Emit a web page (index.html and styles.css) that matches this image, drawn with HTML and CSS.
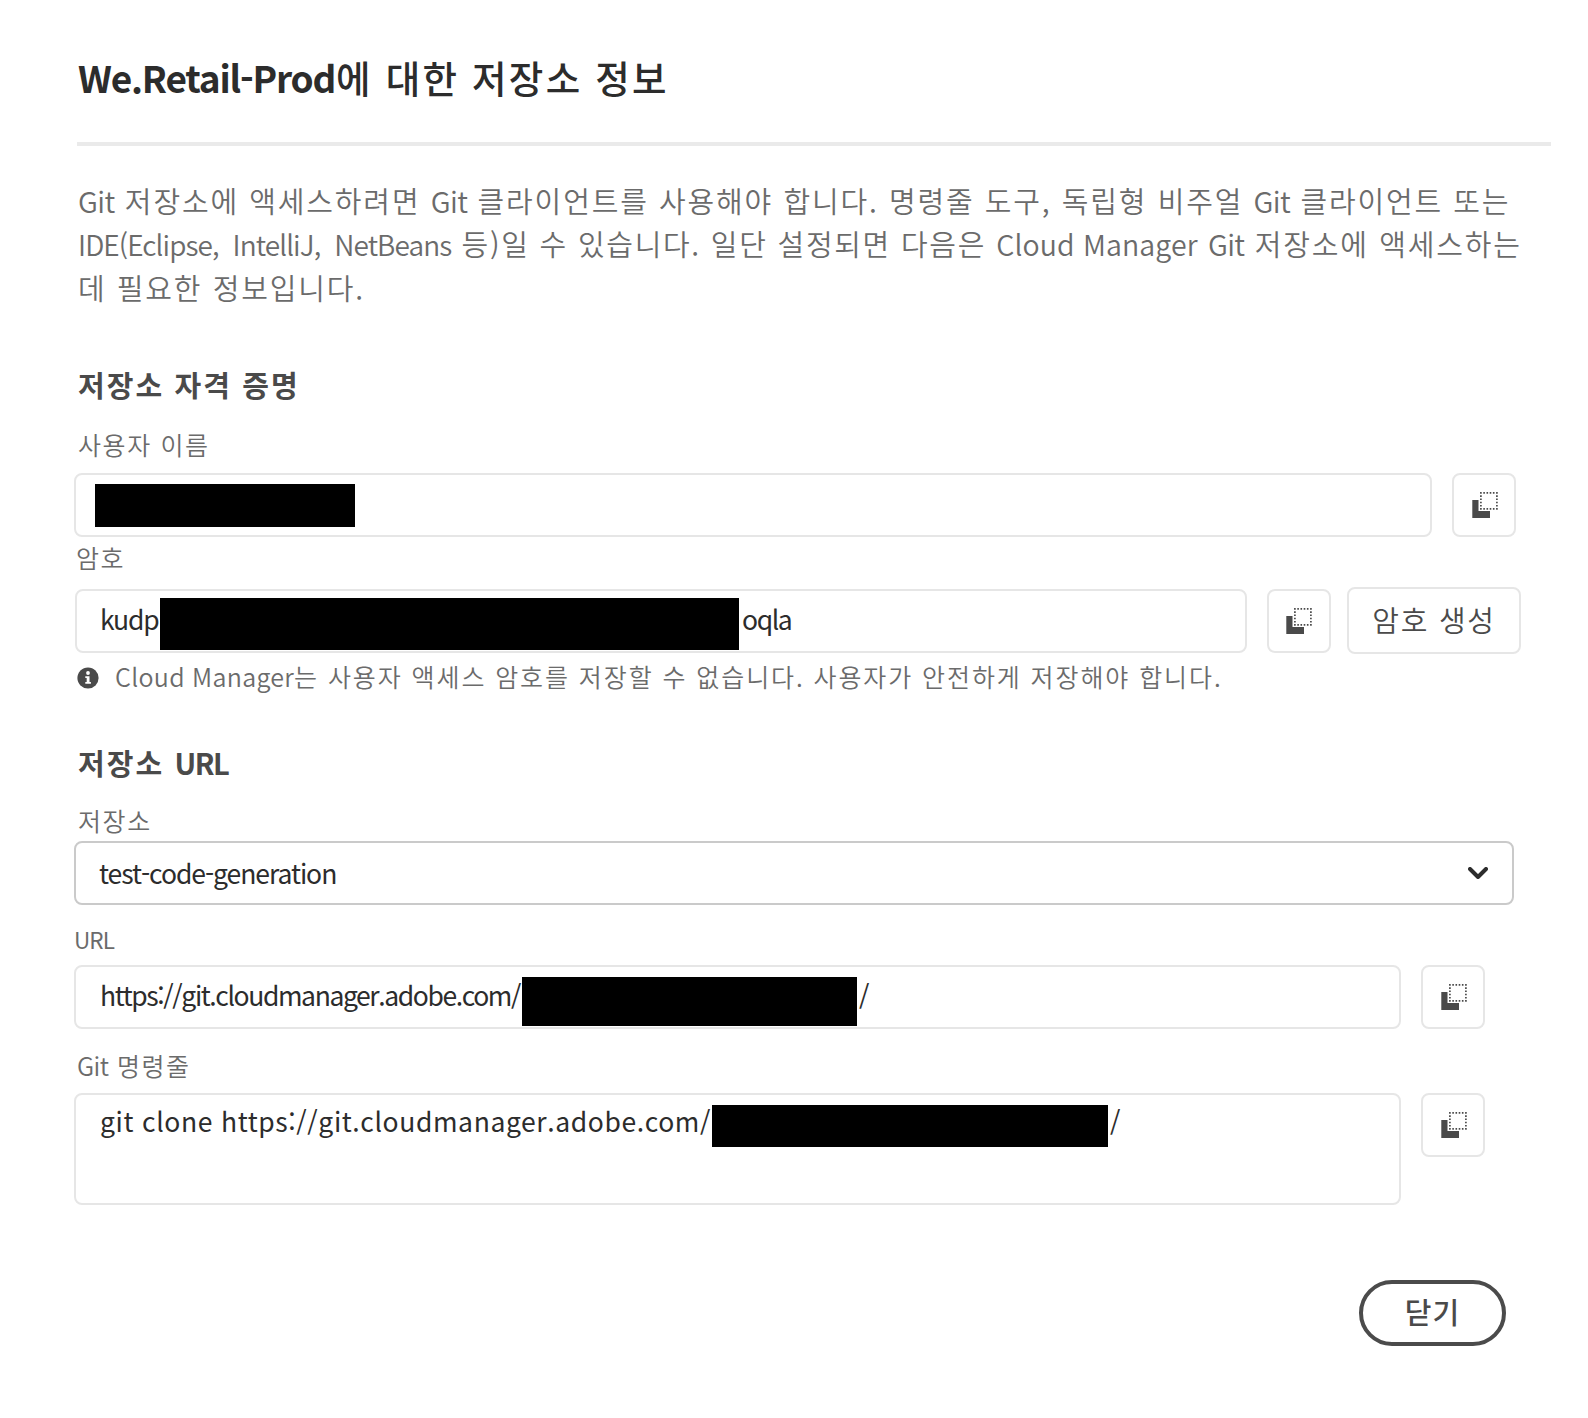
FILE: index.html
```html
<!DOCTYPE html>
<html lang="ko">
<head>
<meta charset="utf-8">
<title>저장소 정보</title>
<link rel="stylesheet" href="styles.css">
</head>
<body>
<svg class="defs" aria-hidden="true">
  <symbol id="copy" viewBox="0 0 26 26">
    <path d="M0.3 8H6.5V19H18V26H0.3Z" fill="#4a4a4a"/>
    <rect x="8.9" y="0.9" width="16" height="16" fill="none" stroke="#4a4a4a" stroke-width="1.7" stroke-dasharray="1.6 1.6" stroke-dashoffset="0.8"/>
  </symbol>
</svg>
<main class="dialog">
  <h1 class="title"><span class="title-latin">We.Retail-Prod</span>에 대한 저장소 정보</h1>
  <p class="intro"><span class="tight">Git</span> 저장소에 액세스하려면 <span class="tight">Git</span> 클라이언트를 사용해야 합니다. 명령줄 도구, 독립형 비주얼 <span class="tight">Git</span> 클라이언트 또는<br><span class="products">IDE(Eclipse, IntelliJ, NetBeans</span> <span class="condensed">등)일 수 있습니다. 일단 설정되면 다음은</span> <span class="brand">Cloud Manager</span> <span class="tight">Git</span> 저장소에 액세스하는<br>데 필요한 정보입니다.</p>

  <section class="credentials">
    <h2 class="heading">저장소 자격 증명</h2>
    <label class="label">사용자 이름</label>
    <div class="row">
      <div class="field field-user"><span class="redact redact-user"></span></div>
      <button class="copy"><svg><use href="#copy"/></svg></button>
    </div>
    <label class="label label-password">암호</label>
    <div class="row row-password">
      <div class="field field-password"><span class="value value-password">kudp</span><span class="redact redact-password"></span><span class="value value-tail">oqla</span></div>
      <button class="copy"><svg><use href="#copy"/></svg></button>
      <button class="generate">암호 생성</button>
    </div>
    <p class="hint">
      <svg class="info" viewBox="0 0 22 22"><circle cx="11" cy="11" r="10.6" fill="#4a4a4a"/><circle cx="11" cy="6" r="1.9" fill="#fff"/><path d="M8.3 9.2h4.2v5.8h1.4v1.8H8.3V15h1.4v-4H8.3Z" fill="#fff"/></svg>
      <span class="hint-text"><span class="latin">Cloud Manager</span>는 사용자 액세스 암호를 저장할 수 없습니다. 사용자가 안전하게 저장해야 합니다.</span>
    </p>
  </section>

  <section class="urls">
    <h2 class="heading">저장소 <span class="heading-latin">URL</span></h2>
    <label class="label">저장소</label>
    <div class="select"><span class="value value-select">test-code-generation</span><svg class="chevron" viewBox="0 0 20 12"><path d="M2 2L10 10L18 2" fill="none" stroke="#2c2c2c" stroke-width="4" stroke-linecap="round" stroke-linejoin="round"/></svg></div>
    <label class="label label-url">URL</label>
    <div class="row">
      <div class="field field-url"><span class="value value-url">https://git.cloudmanager.adobe.com/</span><span class="redact redact-url"></span><span class="value value-slash">/</span></div>
      <button class="copy"><svg><use href="#copy"/></svg></button>
    </div>
    <label class="label label-git"><span class="tight">Git</span> 명령줄</label>
    <div class="row">
      <div class="field field-git"><span class="value value-git">git clone https://git.cloudmanager.adobe.com/</span><span class="redact redact-git"></span><span class="value value-slash-git">/</span></div>
      <button class="copy"><svg><use href="#copy"/></svg></button>
    </div>
  </section>
  <footer class="footer"><button class="close">닫기</button></footer>
</main>
</body>
</html>
```
FILE: styles.css
```css
* { box-sizing: border-box; margin: 0; padding: 0; }
body { background: #fff; color: #6b6b6b; font-family: "Noto Sans CJK KR", "Open Sans", sans-serif; width: 1588px; height: 1418px; overflow: hidden; }
.defs { display: none; }
button { font: inherit; background: #fff; color: inherit; }
.dialog { padding: 46px 37px 0 74px; }
.title { height: 100px; margin-left: 3px; padding-left: 1px; border-bottom: 4px solid #eaeaea; font-size: 37.5px; line-height: 61px; font-weight: 500; letter-spacing: 2.3px; color: #2c2c2c; white-space: nowrap; }
.title-latin { font-size: 37px; font-weight: 700; letter-spacing: -1.2px; margin-right: 1px; }
.intro { margin: 33px 0 0 4px; height: 129px; font-size: 29px; line-height: 43px; font-weight: 350; letter-spacing: 1.85px; word-spacing: 0.3px; white-space: nowrap; }
.tight { letter-spacing: -0.6px; }
.products { font-size: 28px; letter-spacing: -0.9px; word-spacing: 7px; }
.condensed { letter-spacing: 1.65px; }
.brand { font-size: 28.5px; letter-spacing: 0.1px; }
.latin { letter-spacing: 0.3px; }
.credentials { padding-top: 54px; }
.heading { height: 44px; padding-left: 4px; font-size: 29px; line-height: 44px; font-weight: 700; letter-spacing: 2.1px; color: #4a4a4a; white-space: nowrap; }
.heading-latin { letter-spacing: -1.5px; }
.label { display: block; height: 41px; margin-top: 26px; padding-left: 4px; font-size: 25px; line-height: 24px; font-weight: 350; letter-spacing: 1.6px; white-space: nowrap; }
.row { display: flex; align-items: flex-start; }
.field { display: flex; align-items: flex-start; height: 64px; border: 2px solid #e6e6e6; border-radius: 8px; color: #2c2c2c; }
.field-user { width: 1358px; }
.redact { flex: none; background: #000; }
.redact-user { width: 260px; height: 43px; margin: 9px 0 0 19px; }
.copy { flex: none; width: 64px; height: 64px; margin-left: 20px; padding-left: 18px; border: 2px solid #e6e6e6; border-radius: 8px; text-align: left; }
.copy svg { display: block; width: 26px; height: 26px; }
.label-password { margin-top: 8px; padding-left: 2px; height: 42px; }
.row-password { padding-left: 1px; }
.field-password { width: 1172px; margin-top: 2px; }
.row-password .copy { margin-top: 2px; padding-left: 17px; }
.generate { width: 174px; height: 67px; margin-left: 16px; padding-bottom: 4px; border: 2px solid #e6e6e6; border-radius: 8px; font-size: 29px; line-height: 54px; font-weight: 350; color: #4a4a4a; letter-spacing: 1.7px; white-space: nowrap; }
.value { flex: none; font-size: 26.5px; line-height: 56px; white-space: nowrap; }
.value-password { width: 83px; padding-left: 23px; letter-spacing: -1.2px; }
.redact-password { width: 579px; height: 52px; margin-top: 7px; }
.value-tail { margin-left: 3px; letter-spacing: -1.4px; }
.hint { display: flex; height: 32px; margin-top: 7px; padding-left: 3px; font-size: 25px; line-height: 30px; font-weight: 350; letter-spacing: 1.91px; white-space: nowrap; }
.info { width: 22px; height: 22px; margin: 6px 16px 0 0; }
.urls { padding-top: 47px; }
.urls .heading + .label { height: 33px; margin-top: 24px; }
.select { display: flex; justify-content: space-between; width: 1440px; height: 64px; padding: 0 24px 0 23px; border: 2px solid #cacaca; border-radius: 8px; color: #2c2c2c; }
.value-select { line-height: 60px; letter-spacing: -1.05px; }
.chevron { width: 20px; height: 12px; margin-top: 24px; }
.label-url { height: 37px; margin-top: 23px; padding-left: 0; font-size: 22.5px; line-height: 22px; letter-spacing: -0.9px; font-weight: 400; }
.field-url { width: 1327px; }
.value-url { width: 446px; padding-left: 24px; line-height: 56px; letter-spacing: -1.4px; }
.redact-url { width: 335px; height: 49px; margin-top: 10px; }
.value-slash { margin-left: 2px; }
.label-git { margin-top: 24px; padding-left: 3px; height: 40px; }
.field-git { width: 1327px; height: 112px; }
.value-git { width: 636px; padding-left: 24px; line-height: 52px; letter-spacing: 0.6px; }
.redact-git { width: 396px; height: 42px; margin-top: 10px; }
.value-slash-git { margin-left: 2px; line-height: 52px; }
.footer { display: flex; justify-content: flex-end; padding: 75px 45px 0 0; }
.close { width: 147px; height: 66px; padding-bottom: 4px; border: 4px solid #4b4b4b; border-radius: 33px; font-size: 29px; line-height: 49px; font-weight: 500; color: #4a4a4a; letter-spacing: 1px; }
```
